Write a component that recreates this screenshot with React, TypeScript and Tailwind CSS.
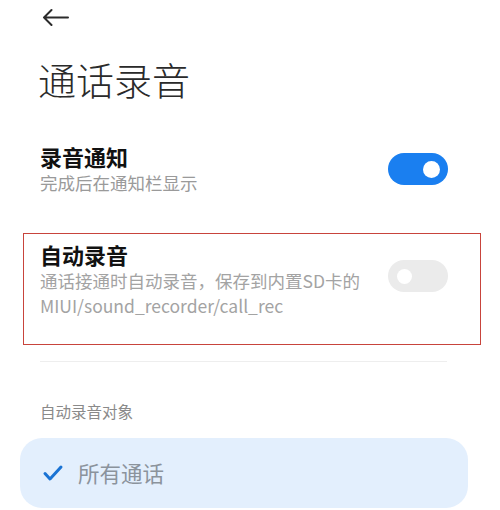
import React, { useState } from 'react';

const font = { fontFamily: '"Noto Sans CJK SC", "Noto Sans", sans-serif' };

const Toggle: React.FC<{ on: boolean; onClick?: () => void }> = ({ on, onClick }) => (
  <button
    onClick={onClick}
    className={`flex h-[32px] w-[60px] shrink-0 items-center rounded-full px-[8px] ${
      on ? 'justify-end bg-[#1a7ff0]' : 'justify-start bg-[#ebebeb]'
    }`}
  >
    <span className={`rounded-full bg-white ${on ? 'h-[17px] w-[17px]' : 'h-[15px] w-[15px] ml-[1px]'}`} />
  </button>
);

export default function App() {
  const [notify, setNotify] = useState(true);
  const [auto, setAuto] = useState(false);

  return (
    <div className="h-[510px] w-[500px] overflow-hidden bg-white" style={font}>
      <div className="pl-[42px] pt-[8px]">
        <svg width="28" height="18" viewBox="0 0 28 18" fill="none" stroke="#2b2b2b" strokeWidth="2" strokeLinecap="round" strokeLinejoin="round">
          <path d="M2 9.5h24M9.5 2L2 9.5 9.5 17" />
        </svg>
      </div>

      <h1 className="mt-[31px] pl-[38px] text-[38px] font-light leading-[44px] text-[#2a2a2a]">通话录音</h1>

      <div className="mt-[42px] flex items-center justify-between pl-[40px] pr-[52px]">
        <div>
          <p className="text-[22px] font-bold leading-[26px] text-[#111]">录音通知</p>
          <p className="mt-[2px] text-[17.5px] leading-[24px] text-[#9a9a9a]">完成后在通知栏显示</p>
        </div>
        <Toggle on={notify} onClick={() => setNotify(!notify)} />
      </div>

      <div className="mt-[38px] ml-[23px] mr-[19px] h-[112px] border border-[#c8443c] pl-[16px] pr-[32px] pt-[7px]">
        <div className="flex items-start justify-between">
          <div>
            <p className="text-[22px] font-bold leading-[26px] text-[#111]">自动录音</p>
            <p className="mt-[1px] text-[17.5px] leading-[25px] text-[#a3a3a3]">
              通话接通时自动录音，保存到内置SD卡的
              <br />
              MIUI/sound_recorder/call_rec
            </p>
          </div>
          <div className="mt-[19px]">
            <Toggle on={auto} onClick={() => setAuto(!auto)} />
          </div>
        </div>
      </div>

      <div className="mt-[16px] ml-[40px] mr-[53px] h-px bg-[#eeeeee]" />

      <p className="mt-[38px] pl-[40px] text-[15.5px] leading-[22px] text-[#8a8a8a]">自动录音对象</p>

      <div className="mt-[16px] ml-[20px] mr-[32px] flex h-[70px] items-center gap-[14px] rounded-[22px] bg-[#e3effd] pl-[22px]">
        <svg width="22" height="18" viewBox="0 0 22 18" fill="none" stroke="#1a73d4" strokeWidth="3" strokeLinecap="round" strokeLinejoin="round">
          <path d="M3 9.5l5 5.5L19 3" />
        </svg>
        <span className="text-[21.5px] leading-[28px] text-[#8b939c]">所有通话</span>
      </div>
    </div>
  );
}
